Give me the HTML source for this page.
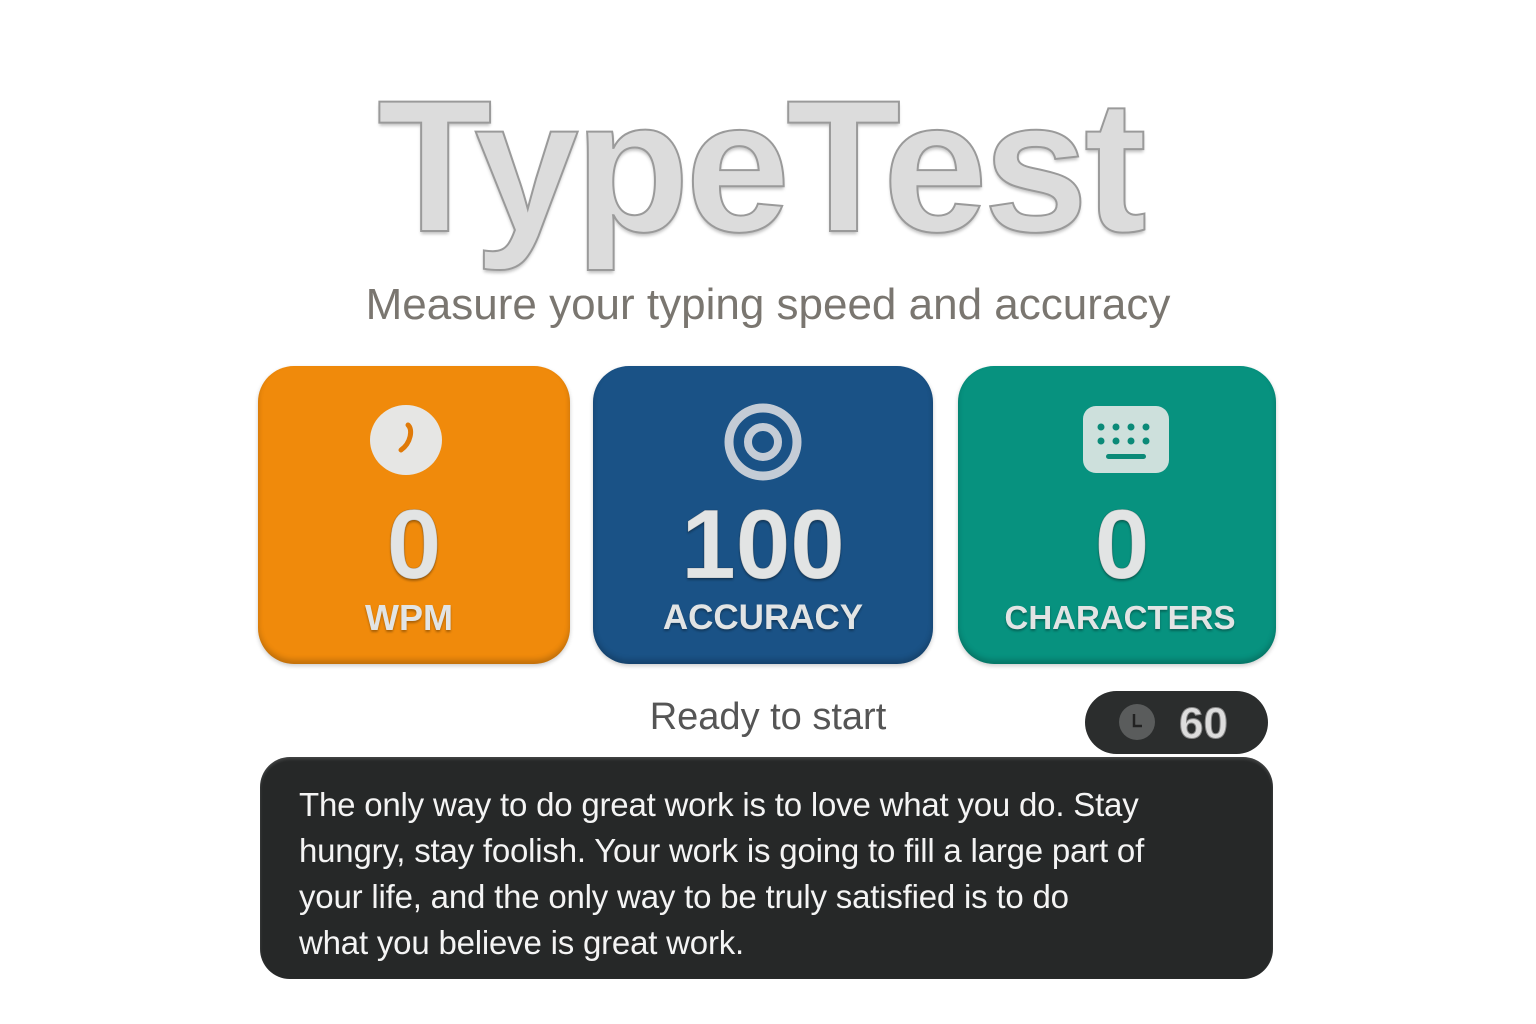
<!DOCTYPE html>
<html><head><meta charset="utf-8"><style>
body{margin:0;width:1536px;height:1024px;background:#fff;position:relative;overflow:hidden;font-family:"Liberation Sans",sans-serif}
.abs{position:absolute}
.title{left:-8px;width:1536px;top:58px;text-align:center;font-weight:bold;font-size:188px;letter-spacing:-4px;color:#dcdcdc;-webkit-text-stroke:2px #9a9a9a;text-shadow:0 3px 3px rgba(0,0,0,.25)}
.sub{left:0;width:1536px;top:280px;text-align:center;font-size:44px;color:#7a7670}
.card{top:366px;height:298px;border-radius:36px;box-shadow:inset 0 -4px 6px rgba(0,0,0,.2),0 2px 4px rgba(0,0,0,.2);text-align:center;color:#e2e4e4}
.num{position:absolute;left:0;right:0;top:128px;font-weight:bold;font-size:98px;line-height:100px;-webkit-text-stroke:1px rgba(0,0,0,.15);text-shadow:0 2px 2px rgba(0,0,0,.3)}
.lab{position:absolute;left:0;right:0;top:232px;font-weight:bold;font-size:36px;line-height:40px;text-shadow:0 2px 2px rgba(0,0,0,.3)}
.box{left:260px;top:757px;width:1013px;height:222px;background:#262828;border-radius:30px;box-shadow:inset 0 2px 3px rgba(255,255,255,.15)}
.txt{left:299px;top:782px;font-size:33px;line-height:46px;color:#f4f4f4;letter-spacing:-0.2px}
</style></head><body>
<div class="abs title">TypeTest</div>
<div class="abs sub">Measure your typing speed and accuracy</div>

<div class="abs card" style="left:258px;width:312px;background:#f08a0b">
<svg class="abs" style="left:111px;top:37px" width="74" height="74" viewBox="0 0 74 74"><ellipse cx="37" cy="37" rx="36" ry="35" fill="#e6e6e4"/><path d="M39 22 C44 26 42 40 32 47" stroke="#e07a08" stroke-width="5" fill="none" stroke-linecap="round"/></svg>
<div class="num">0</div><div class="lab" style="left:-10px">WPM</div></div>

<div class="abs card" style="left:593px;width:340px;background:#1a5286">
<svg class="abs" style="left:130px;top:36px" width="80" height="80" viewBox="0 0 80 80"><circle cx="40" cy="40" r="34" fill="none" stroke="#c4ccd6" stroke-width="9"/><circle cx="40" cy="40" r="15" fill="none" stroke="#c4ccd6" stroke-width="8"/></svg>
<div class="num">100</div><div class="lab" style="font-size:35px">ACCURACY</div></div>

<div class="abs card" style="left:958px;width:318px;background:#07927f">
<svg class="abs" style="left:124px;top:39px" width="88" height="70" viewBox="0 0 88 70"><rect x="1" y="1" width="86" height="67" rx="13" fill="#cde0dc"/><g fill="#0b8a78"><circle cx="19" cy="22" r="3.5"/><circle cx="34" cy="22" r="3.5"/><circle cx="49" cy="22" r="3.5"/><circle cx="64" cy="22" r="3.5"/><circle cx="19" cy="36" r="3.5"/><circle cx="34" cy="36" r="3.5"/><circle cx="49" cy="36" r="3.5"/><circle cx="64" cy="36" r="3.5"/><rect x="24" y="49" width="40" height="5" rx="2.5"/></g></svg>
<div class="num" style="left:10px">0</div><div class="lab" style="font-size:33px;left:6px">CHARACTERS</div></div>

<div class="abs" style="left:568px;width:400px;top:696px;text-align:center;font-size:38px;color:#555">Ready to start</div>
<div class="abs" style="left:1085px;top:691px;width:183px;height:63px;border-radius:32px;background:#2b2d2d">
<svg class="abs" style="left:33px;top:12px" width="38" height="38" viewBox="0 0 38 38"><circle cx="19" cy="19" r="18" fill="#5a5c5c"/><path d="M16 11 V23 H24" stroke="#222" stroke-width="2.5" fill="none"/></svg>
<div class="abs" style="left:94px;top:8px;font-weight:bold;font-size:44px;color:#ddd;-webkit-text-stroke:1px #888">60</div></div>

<div class="abs box"></div>
<div class="abs txt">The only way to do great work is to love what you do. Stay<br>hungry, stay foolish. Your work is going to fill a large part of<br>your life, and the only way to be truly satisfied is to do<br>what you believe is great work.</div>
</body></html>
